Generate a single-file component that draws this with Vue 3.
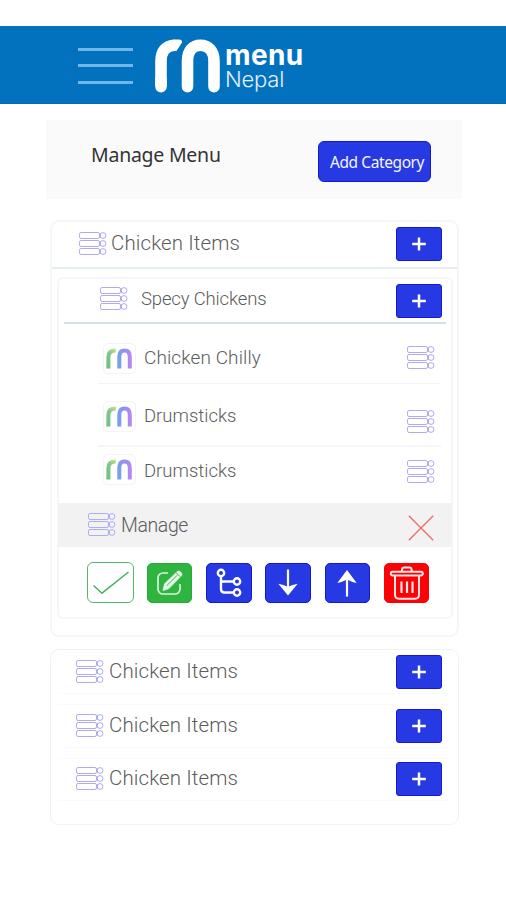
<script setup>
import { h } from 'vue'

const StackIcon = () =>
  h('svg', { viewBox: '0 0 28 24', width: 28, height: 24, fill: 'none', stroke: '#adabf4', 'stroke-width': 1 },
    [0.5, 8.5, 16.5].flatMap((y) => [
      h('rect', { x: 0.5, y, width: 20, height: 6, rx: 1.6 }),
      h('circle', { cx: 24, cy: y + 3, r: 2.9 }),
      h('path', { d: `M21 ${y + 1}v4`, 'stroke-width': 1.6 }),
    ]))

const PlusIcon = () =>
  h('svg', { viewBox: '0 0 14 14', width: 14, height: 14 },
    [h('path', { d: 'M7 0.4v13.2M0.2 7h13.6', stroke: '#fff', 'stroke-width': 2.5 })])

const dishes = [
  { name: 'Chicken Chilly', cls: 'first' },
  { name: 'Drumsticks', cls: 'second' },
  { name: 'Drumsticks', cls: 'third' },
]
const categories = ['Chicken Items', 'Chicken Items', 'Chicken Items']
</script>

<template>
  <div class="page">
    <header class="topbar">
      <div class="burger"><i></i><i></i><i></i></div>
      <svg class="logo" viewBox="0 0 65 54" width="65" height="54" fill="none" stroke="#fff" stroke-width="11.6" stroke-linecap="round">
        <path d="M6 47.600V22C6 12.500 11 6.400 19.500 6.200" stroke-linecap="butt" />
        <path d="M6 47.600V40" />
        <path d="M18.500 .4H24Q27.500 .8 27 3.500L21.500 12H18.500Z" fill="#fff" stroke="none" />
        <path d="M32.500 47.600V22C32.500 11.500 38 6.200 45.500 6.200S59 11.500 59 22V47.600" />
      </svg>
      <div class="brand">
        <b>menu</b>
        <span>Nepal</span>
      </div>
    </header>

    <section class="heading">
      <h1>Manage Menu</h1>
      <button class="add">Add Category</button>
    </section>

    <section class="card open">
      <div class="row main">
        <StackIcon class="stack" />
        <span class="label">Chicken Items</span>
        <button class="plus"><PlusIcon /></button>
      </div>

      <div class="inner">
        <div class="row sub">
          <StackIcon class="stack" />
          <span class="label">Specy Chickens</span>
          <button class="plus"><PlusIcon /></button>
        </div>

        <div v-for="(d, i) in dishes" :key="i" class="dish" :class="d.cls">
          <div class="tile">
            <svg viewBox="0 0 26 21" width="26" height="21" fill="none" stroke-width="4" stroke-linecap="butt">
              <defs>
                <linearGradient :id="'g' + i" x1="0" y1="20" x2="10" y2="0" gradientUnits="userSpaceOnUse">
                  <stop offset="0" stop-color="#6cc083" /><stop offset=".65" stop-color="#7fc68d" /><stop offset="1" stop-color="#d3e58e" />
                </linearGradient>
                <linearGradient :id="'p' + i" x1="11" y1="0" x2="26" y2="0" gradientUnits="userSpaceOnUse">
                  <stop offset="0" stop-color="#6fa3ec" /><stop offset=".5" stop-color="#9490ee" /><stop offset="1" stop-color="#bf84f3" />
                </linearGradient>
              </defs>
              <path d="M2.400 20.500V9C2.400 5 5 2.600 9.800 2.600" :stroke="`url(#g${i})`" />
              <path d="M13.300 20.500V9C13.300 4.800 15.300 2.600 18.600 2.600S23.800 4.800 23.800 9V20.500" :stroke="`url(#p${i})`" />
            </svg>
          </div>
          <span class="label">{{ d.name }}</span>
          <StackIcon class="stack" />
        </div>

        <div class="manage">
          <StackIcon class="stack" />
          <span class="label">Manage</span>
          <svg class="close" viewBox="0 0 26 26" width="26" height="26"><path d="M.8.8l24.400 24.400M25.200.8L.8 25.200" stroke="#ee6a6a" stroke-width="1.300" /></svg>
        </div>

        <div class="actions">
          <button class="act check">
            <svg viewBox="0 0 47 41" width="47" height="41" fill="none" stroke="#4bb163" stroke-width="1.500"><path d="M6.500 23.500L15 31.200 41.500 10" /></svg>
          </button>
          <button class="act edit">
            <svg viewBox="0 0 46 40" width="46" height="40" fill="none" stroke="#d9f4dc" stroke-width="1.700">
              <path d="M21 10H16a5 5 0 0 0-5 5V26a5 5 0 0 0 5 5H28a5 5 0 0 0 5-5V21" />
              <path d="M16 27.500L17.600 20.800 30.600 8.300Q32 7.400 33.800 9.200T34.600 12.600L21.800 25.600Z" fill="#e6f8e8" stroke-width="1" />
              <path d="M19.600 22.800L30.500 12M29 9.600l4.200 4.200" stroke="#3fb550" stroke-width="1" />
            </svg>
          </button>
          <button class="act">
            <svg viewBox="0 0 46 40" width="46" height="40" fill="none" stroke="#fff" stroke-width="2.400">
              <circle cx="15" cy="10" r="3.200" /><circle cx="31" cy="18.500" r="3.200" /><circle cx="31" cy="29.500" r="3.200" />
              <path d="M15 13.500V26Q15 29.500 18.500 29.500H27.500M15 18.500H27.500" />
            </svg>
          </button>
          <button class="act">
            <svg viewBox="0 0 46 40" width="46" height="40"><path d="M23 6.500V27" stroke="#fff" stroke-width="2.200" /><path d="M23 32.500L13.300 20.800Q18.500 21.600 23 23.800 27.500 21.600 32.700 20.800Z" fill="#fff" /></svg>
          </button>
          <button class="act">
            <svg viewBox="0 0 46 40" width="46" height="40"><path d="M23 12V33.500" stroke="#fff" stroke-width="2.200" /><path d="M23 7L13.300 20Q18.500 19 23 16.500 27.500 19 32.700 20Z" fill="#fff" /></svg>
          </button>
          <button class="act trash">
            <svg viewBox="0 0 46 40" width="46" height="40" fill="none" stroke="#ffe6e6" stroke-width="2">
              <rect x="6.800" y="8.800" width="32" height="3.600" rx="1.800" />
              <path d="M18 8.600V7Q18 4.600 20.300 4.600H25.300Q27.600 4.600 27.600 7V8.600" />
              <path d="M11 13V31.500Q11 35.700 15 35.700H31Q35 35.700 35 31.500V13" />
              <path d="M17.500 18.500V30M23 18.500V30M28.500 18.500V30" stroke-width="2.200" />
            </svg>
          </button>
        </div>
      </div>
    </section>

    <section class="card list">
      <div v-for="(c, i) in categories" :key="i" class="row cat">
        <StackIcon class="stack" />
        <span class="label">{{ c }}</span>
        <button class="plus"><PlusIcon /></button>
      </div>
    </section>
  </div>
</template>

<style>
body { background: #fff; }
</style>

<style scoped>
* { box-sizing: border-box; }
svg { display: block; flex: none; }
button { padding: 0; border: 0; font: inherit; display: flex; align-items: center; justify-content: center; flex: none; }
.page { width: 506px; height: 900px; padding-top: 26px; overflow: hidden; background: #fff; font-family: Roboto, "Liberation Sans", sans-serif; font-weight: 300; color: #5c5c5c; }
.topbar { height: 78px; background: #0272bf; display: flex; align-items: flex-start; padding-left: 78px; border-bottom: 1px solid #0a68b0; }
.burger { width: 55px; padding-top: 22px; }
.burger i { display: block; height: 3px; background: #70b6e8; margin-bottom: 13px; }
.burger i:nth-child(2) { margin-bottom: 14px; }
.logo { margin: 13px 0 0 22px; }
.brand { margin: 15px 0 0 5px; color: #fff; display: flex; flex-direction: column; font-family: Inter, sans-serif; }
.brand b { font-size: 28px; line-height: 28px; font-weight: 700; letter-spacing: .4px; }
.brand span { font-size: 22px; line-height: 20px; font-weight: 300; color: #e2f0fb; letter-spacing: -.2px; }

.heading { width: 416px; height: 79px; margin: 16px 0 0 46px; padding: 21px 31px 0 45px; background: #fafafa; display: flex; justify-content: space-between; align-items: flex-start; font-family: "Noto Sans", sans-serif; }
.heading h1 { margin: 0; font-size: 19.500px; line-height: 28px; font-weight: 400; color: #333; letter-spacing: -.25px; }
.add { width: 113px; height: 41px; border-radius: 6px; background: #2639e3; border: 1px solid #1519cf; color: #f4f5ff; font-size: 15.500px; font-weight: 400; letter-spacing: -.4px; padding-left: 5px; white-space: nowrap; }

.card { width: 409px; margin-left: 50px; border: 2px solid #f5f7f7; border-radius: 9px; }
.open { height: 417px; margin-top: 21px; }
.row { display: flex; align-items: flex-start; }
.label { line-height: 24px; white-space: nowrap; }
.plus { width: 46px; height: 34px; margin-left: auto; background: #2639e3; border: 1px solid #1519cf; border-radius: 3px; }
.main { height: 47px; padding: 5px 15px 0 27px; border-bottom: 2px solid #e4eef1; }
.main .stack { margin-top: 5px; }
.main .label { margin: 4px 0 0 4px; font-size: 20.500px; letter-spacing: .1px; }

.inner { width: 396px; height: 342px; margin: 8px 0 0 5px; border: 2px solid #f5f6f6; border-radius: 6px; }
.sub { height: 45px; margin: 0 5px; padding: 5px 4px 0 36px; border-bottom: 2px solid #cfe0ef; }
.sub .stack { margin-top: 3px; }
.sub .label { margin: 3px 0 0 13px; font-size: 18.500px; letter-spacing: -.15px; }

.dish { display: flex; align-items: flex-start; margin: 0 10px 0 39px; padding: 0 6px 0 5px; }
.tile { width: 33px; height: 31px; border: 1px solid #f3f4f4; border-radius: 5px; display: flex; align-items: center; justify-content: center; }
.tile svg { margin-right: 1px; }
.dish .label { margin-left: 8px; font-size: 18.500px; }
.dish .stack { margin-left: auto; }
.first { height: 60px; padding-top: 19px; border-bottom: 1px solid #f3f4f4; }
.dish.first .label { margin-top: 3px; font-size: 19px; letter-spacing: .1px; }
.first .stack { margin-top: 3px; }
.second { height: 63px; padding-top: 17px; border-bottom: 2px solid #f5f7f7; }
.second .label { margin-top: 3px; }
.second .stack { margin-top: 9px; }
.third { height: 56px; padding-top: 7px; }
.third .label { margin-top: 5px; }
.third .stack { margin-top: 6px; }

.manage { height: 44px; margin: 0 -1px; background: #f2f2f2; display: flex; align-items: flex-start; padding: 10px 18px 0 30px; }
.manage .label { margin: 1px 0 0 5px; font-size: 19.500px; letter-spacing: -.4px; }
.close { margin: 2px 0 0 auto; }
.actions { display: flex; align-items: center; gap: 13.800px; padding: 15px 0 0 28px; }
.act { width: 45.500px; height: 40px; border-radius: 5px; background: #2639e3; border: 1px solid #1519cf; }
.check { width: 47px; height: 41px; margin-right: -1px; background: #fff; border: 1.500px solid #57b66c; border-radius: 6px; }
.edit { background: #2fb440; border-color: #24ab36; }
.trash { background: #fb0207; border-color: #fb0207; }

.list { height: 176px; margin-top: 12px; padding-top: 5px; border-width: 1px; border-color: #f1f2f2; }
.cat { height: 53.500px; padding: 0 16px 0 25px; position: relative; }
.cat .stack { margin-top: 5px; }
.cat .label { margin: 4px 0 0 5px; font-size: 20.500px; letter-spacing: .1px; }
.cat::after { content: ""; position: absolute; left: 8px; right: 8px; top: 38px; height: 10px; border: solid #fafafa; border-width: 1px 0; }
.cat:last-child::after { border-bottom: 0; }
</style>
